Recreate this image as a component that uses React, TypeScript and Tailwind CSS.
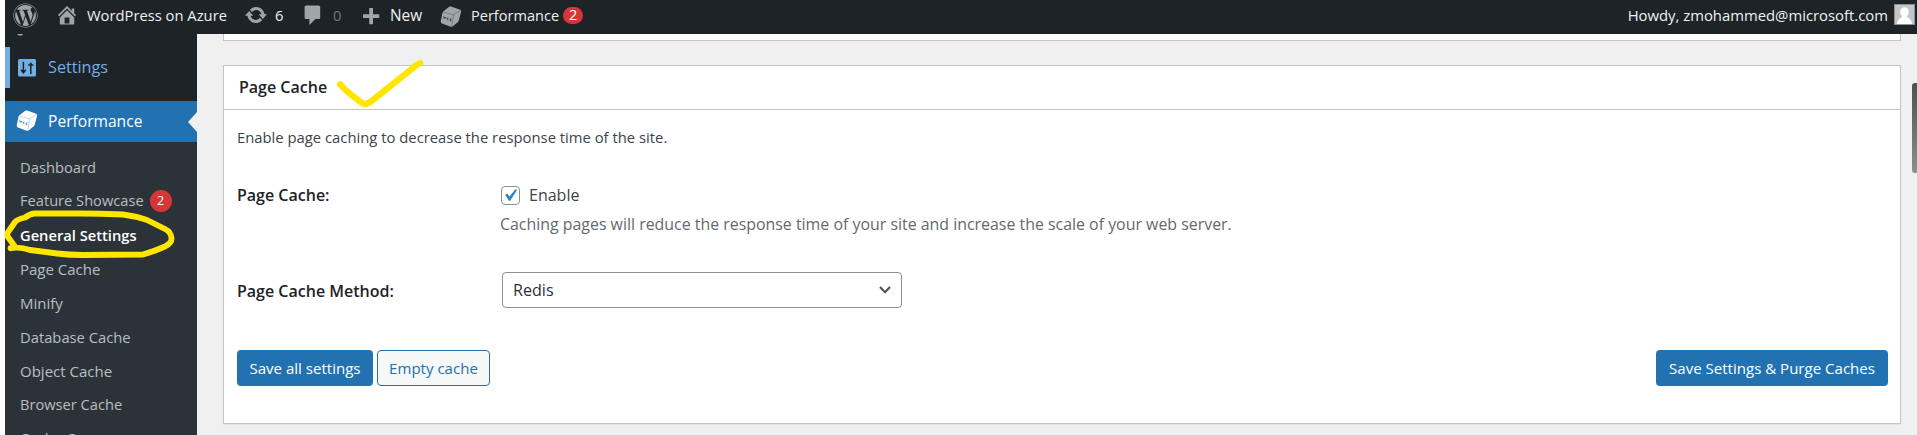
import React from "react";
import { FaWordpress } from "react-icons/fa";

function Dashicon({ d, className }: { d: string; className: string }) {
  return (
    <svg viewBox="0 0 20 20" fill="currentColor" className={`shrink-0 text-[#a0a5aa] ${className}`}>
      <path d={d} />
    </svg>
  );
}

const HOME =
  "M16 8.5l1.53 1.53-1.06 1.06L10 4.6l-6.47 6.49-1.06-1.06L10 2.5l4 4v-2h2v4zm-6-2.46l6 5.99V18H4v-5.97zM12 17v-5H8v5h4z";
const UPDATE =
  "M10.2 3.28c3.53 0 6.43 2.61 6.92 6h2.08l-3.5 4-3.5-4h2.32c-.45-1.97-2.21-3.45-4.32-3.45-1.45 0-2.73.71-3.54 1.78L4.95 5.66C6.23 4.2 8.11 3.28 10.2 3.28zm-.4 13.44c-3.52 0-6.43-2.61-6.92-6H.8l3.5-4c1.17 1.33 2.33 2.67 3.5 4H5.48c.45 1.97 2.21 3.45 4.32 3.45 1.45 0 2.73-.71 3.54-1.78l1.71 1.95c-1.28 1.46-3.15 2.38-5.25 2.38z";
const COMMENT =
  "M4.4 2h10.2c.8 0 1.4.6 1.4 1.4v8.6c0 .8-.6 1.4-1.4 1.4H12l-5 5v-5H4.4c-.8 0-1.4-.6-1.4-1.4V3.400c0-.8.6-1.400 1.4-1.400z";
const PLUS = "M17 9v3h-5v5H9v-5H4V9h5V4h3v5h5z";

function Cube({ body, line, className }: { body: string; line: string; className: string }) {
  return (
    <svg viewBox="0 0 22 22" className={`shrink-0 ${className}`}>
      <path
        d="M9.2 .8 Q10 .3 11 .6 L20.3 3.8 Q21.4 4.3 21.2 5.4 L18.8 14.6 Q18.5 15.6 17.7 16.2 L12.6 20.4 Q11.8 21 10.8 20.7 L1.9 17.4 Q.6 16.9 .7 15.6 L2.4 7 Q2.6 6 3.4 5.3 Z"
        fill={body}
      />
      <path d="M3 6 L13.6 8.8 L20.8 4.4 M13.6 8.8 L11.8 20.4" fill="none" stroke={line} strokeWidth=".6" opacity=".5" />
      <path
        d="M3.6 10.4 l.5 1.8 l.8 -.9 l.3 1.2 l.9 -1.4 M8 11.6 l-.9 .9 l1.2 .7 l-1.1 .7 M11.4 12.8 q-1.5 -.2 -1.3 .7 l.9 .6 q.4 .9 -1.1 .6"
        fill="none"
        stroke={line}
        strokeWidth=".8"
      />
    </svg>
  );
}

const submenu = [
  { label: "Dashboard", cls: "text-[14.75px]" },
  { label: "Feature Showcase", cls: "text-[14.65px]", badge: "2" },
  { label: "General Settings", cls: "text-[14.7px] font-semibold text-white" },
  { label: "Page Cache", cls: "text-[15px]" },
  { label: "Minify", cls: "text-[15px]" },
  { label: "Database Cache", cls: "text-[14.75px]" },
  { label: "Object Cache", cls: "text-[15px]" },
  { label: "Browser Cache", cls: "text-[14.65px]" },
  { label: "Cache Groups", cls: "text-[14.8px]" },
];

function TopBar() {
  return (
    <header className="ml-[5px] flex h-[34px] shrink-0 items-start bg-[#1d2327] text-[14.75px] leading-[31px] text-[#f0f0f1]">
      <div className="w-[50px] shrink-0 pl-[8px] pt-[3px]">
        <FaWordpress className="size-[25px] text-[#a0a5aa]" />
      </div>
      <div className="flex w-[189px] shrink-0">
        <Dashicon d={HOME} className="mt-[3px] size-[24px]" />
        <span className="ml-[8px] whitespace-nowrap">WordPress on Azure</span>
      </div>
      <div className="flex w-[57px] shrink-0">
        <Dashicon d={UPDATE} className="mt-[3px] size-[24px]" />
        <span className="ml-[7px]">6</span>
      </div>
      <div className="flex w-[57px] shrink-0">
        <Dashicon d={COMMENT} className="mt-[3px] size-[24px]" />
        <span className="ml-[8px] text-[#72777c]">0</span>
      </div>
      <div className="flex w-[82px] shrink-0">
        <Dashicon d={PLUS} className="mt-[3px] size-[25px]" />
        <span className="ml-[7px] text-[15.4px]">New</span>
      </div>
      <div className="flex">
        <Cube body="#a0a5aa" line="#1d2327" className="mt-[6px] size-[22px]" />
        <span className="ml-[9px] text-[14.55px]">Performance</span>
        <span className="ml-[4px] mt-[7px] flex h-[17px] w-[20px] items-center justify-center rounded-full bg-[#d63638] text-[14.5px] leading-none text-white">
          2
        </span>
      </div>
      <div className="ml-auto flex pr-[2px]">
        <span className="text-[14.85px]">Howdy, zmohammed@microsoft.com</span>
        <svg viewBox="0 0 21 21" className="ml-[6px] mt-[4px] size-[21px]">
          <rect width="21" height="21" fill="#8c8f94" />
          <rect x="1" y="1" width="19" height="19" fill="#c5c5c5" />
          <ellipse cx="10.5" cy="8" rx="4.4" ry="4.7" fill="#fff" />
          <path d="M3 20 Q3.4 15.5 7.6 13.6 L8 11 H13 L13.4 13.6 Q17.6 15.5 18 20 Z" fill="#fff" />
        </svg>
      </div>
    </header>
  );
}

function Sidebar() {
  return (
    <nav className="ml-[5px] flex w-[192px] shrink-0 flex-col overflow-hidden bg-[#1d2327]">
      <div className="h-[13px] shrink-0 pl-[12px]">
        <svg viewBox="0 0 6 2" className="h-[2px] w-[6px]">
          <path d="M0 0 H6 L5 1.6 H1.6 Z" fill="#a0a5aa" />
        </svg>
      </div>
      <div className="flex h-[41px] shrink-0 items-center border-l-[5px] border-[#72aee6] pl-[8px] text-[#72aee6]">
        <svg viewBox="0 0 18 18" className="size-[18px]">
          <rect width="18" height="17.6" rx="1.6" fill="#72aee6" />
          <path
            d="M5.4 2.8 V13.2 M3 10.8 L5.4 13.8 L7.8 10.8 M12.8 4 V15 M10.2 6 H15.4 M11.8 4.4 H13.8"
            fill="none"
            stroke="#1d2327"
            strokeWidth="1.5"
          />
        </svg>
        <span className="ml-[12px] text-[16.2px]">Settings</span>
      </div>
      <div className="mt-[13px] flex h-[41px] shrink-0 items-center bg-[#2271b1] pl-[11px] text-white">
        <Cube body="#ffffff" line="#2271b1" className="mb-[2px] size-[22px]" />
        <span className="ml-[10px] pt-[1px] text-[15.6px]">Performance</span>
        <svg viewBox="0 0 9 20" className="ml-auto h-[20px] w-[9px]">
          <path d="M9 0 V20 L0 10 Z" fill="#f0f0f1" />
        </svg>
      </div>
      <ul className="flex-1 bg-[#2c3338] pl-[15px] pt-[8.5px] text-[#b9bec3]">
        {submenu.map((item) => (
          <li key={item.label} className={`flex h-[33.9px] items-center ${item.cls}`}>
            {item.label}
            {item.badge && (
              <span className="ml-[6px] flex size-[22px] items-center justify-center rounded-full bg-[#d63638] text-[12.5px] text-white">
                {item.badge}
              </span>
            )}
          </li>
        ))}
      </ul>
    </nav>
  );
}

function Main() {
  return (
    <main className="flex min-w-0 flex-1 flex-col bg-[#f0f0f1] pl-[26px] pr-[16px]">
      <div className="h-[7px] shrink-0 border border-t-0 border-[#c3c4c7] bg-white" />
      <section className="mt-[24px] flex h-[359px] shrink-0 flex-col border border-[#c3c4c7] bg-white text-[#3c434a] shadow-[0_1px_1px_rgba(0,0,0,0.04)]">
        <h2 className="h-[44px] shrink-0 border-b border-[#c3c4c7] pl-[15px] text-[16px] font-semibold leading-[43px] text-[#1d2327]">
          Page Cache
        </h2>
        <div className="flex flex-1 flex-col pl-[13px] pr-[12px]">
          <p className="pt-[15px] text-[14.82px] leading-[24px]">
            Enable page caching to decrease the response time of the site.
          </p>
          <div className="mt-[34px] flex">
            <div className="w-[263px] shrink-0 text-[16px] font-semibold leading-[24px] text-[#1d2327]">
              Page Cache:
            </div>
            <div>
              <label className="flex h-[24px] items-center">
                <span className="ml-[1px] flex size-[19px] items-center justify-center rounded-[4px] border border-[#8c8f94] bg-white">
                  <svg viewBox="0 0 14 14" className="size-[14px]">
                    <path d="M1.2 6.8 L3.4 5.8 L5.4 8.4 L11.2 1.4 L13.2 1.8 L6.2 12.8 L4.8 12.8 Z" fill="#3582c4" />
                  </svg>
                </span>
                <span className="ml-[9px] text-[16px]">Enable</span>
              </label>
              <p className="mt-[5px] text-[15.92px] leading-[24px] text-[#646970]">
                Caching pages will reduce the response time of your site and increase the scale of your web server.
              </p>
            </div>
          </div>
          <div className="mt-[36px] flex h-[36px]">
            <div className="w-[265px] shrink-0 pt-[1px] text-[16px] font-semibold leading-[36px] text-[#1d2327]">
              Page Cache Method:
            </div>
            <div className="flex h-[36px] w-[400px] items-center justify-between rounded-[4px] border border-[#8c8f94] px-[10px] text-[16.1px] text-[#2c3338]">
              <span>Redis</span>
              <svg viewBox="0 0 12 8" className="h-[8px] w-[12px]">
                <path d="M1 1 L6 6.2 L11 1" fill="none" stroke="#50575e" strokeWidth="2.2" />
              </svg>
            </div>
          </div>
          <div className="mt-[42px] flex h-[36px] items-stretch text-[15.05px] leading-[35px]">
            <button className="w-[136px] rounded-[4px] bg-[#2271b1] text-white">Save all settings</button>
            <button className="ml-[4px] w-[113px] rounded-[4px] border border-[#2271b1] bg-[#f6f7f7] leading-[33px] text-[#2271b1]">
              Empty cache
            </button>
            <button className="ml-auto w-[232px] rounded-[4px] bg-[#2271b1] text-white">
              Save Settings &amp; Purge Caches
            </button>
          </div>
        </div>
      </section>
    </main>
  );
}

export default function App() {
  return (
    <div className="relative flex h-[435px] w-[1917px] flex-col overflow-hidden bg-white font-['Open_Sans',sans-serif]">
      <TopBar />
      <div className="flex min-h-0 flex-1">
        <Sidebar />
        <Main />
      </div>
      <div className="absolute right-0 top-[83px] h-[90px] w-[5px] rounded-l-[3px] bg-gradient-to-b from-[#505050] to-[#8f8f8f]" />
      <svg
        viewBox="0 0 460 280"
        className="pointer-events-none absolute left-0 top-0 h-[280px] w-[460px]"
        fill="none"
        stroke="#ffe600"
        strokeLinecap="round"
        strokeLinejoin="round"
      >
        <path
          strokeWidth="5.8"
          d="M10.5 248.2 Q20 246.5 30 250 L57 253.5 Q70 255 83 255 L143 254.5 Q155 251 165 246.5 Q172 243 171.5 238 Q171 232 165 229 L147 220 Q135 216 123 214.5 Q100 213.5 80 213.5 L34 213.5 Q30 214 25 217.5 Q18 219 15 222 L9.5 230 Q6 234 8 237 L14.5 246"
        />
        <path strokeWidth="6.4" d="M340 84.3 Q346 91 354 97 L362 103 Q365 105.500 371 101.500 L411 69.500 Q416 65 420 63.200" />
      </svg>
    </div>
  );
}
